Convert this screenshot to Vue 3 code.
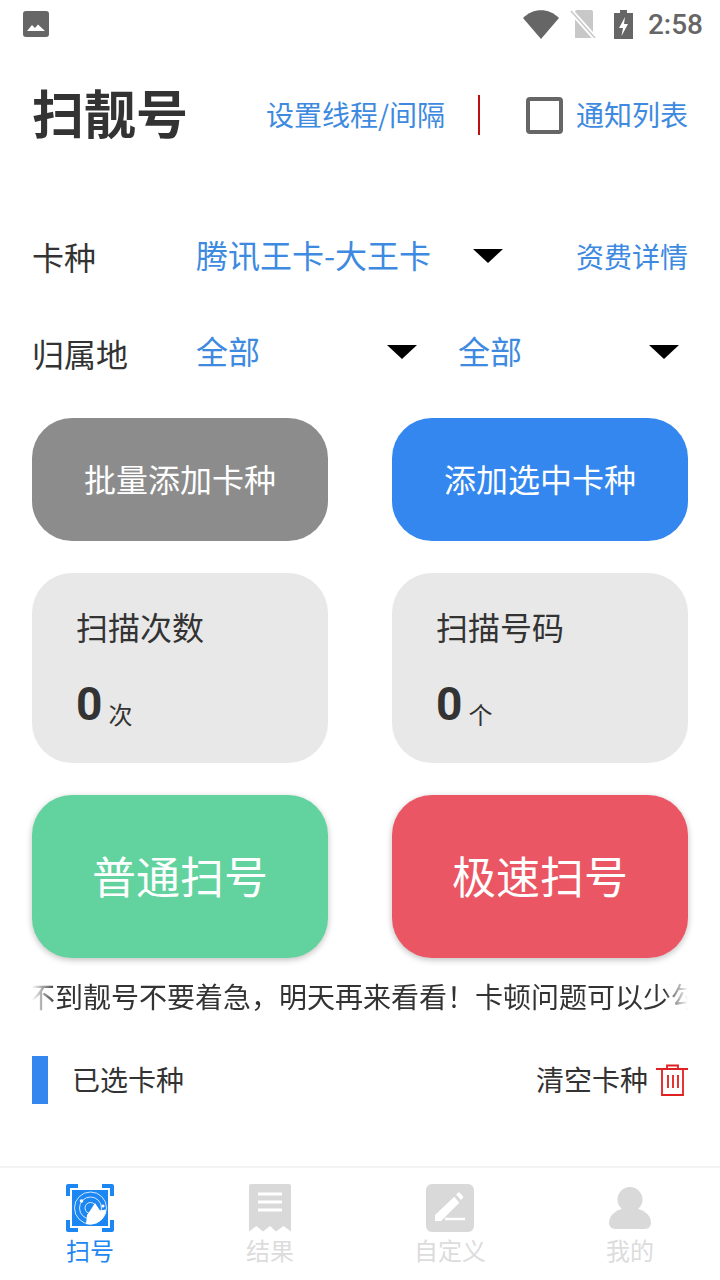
<script setup>
import { ref } from 'vue'

const tabs = ref([
  { key: 'scan', label: '扫号', active: true },
  { key: 'result', label: '结果' },
  { key: 'custom', label: '自定义' },
  { key: 'mine', label: '我的' }
])
</script>

<template>
  <div class="page">
    <div class="status-bar">
      <svg width="26" height="26" viewBox="0 0 26 26">
        <rect width="26" height="26" rx="3" fill="#666" />
        <path d="M4 20l5-6 3 3 3-3.500 7 6.500z" fill="#fff" />
      </svg>
      <div class="st-right">
        <svg width="36" height="29" viewBox="0 0 36 29"><path d="M0 8C10 -2.500 26 -2.500 36 8L18 29z" fill="#666" /></svg>
        <svg class="st-sim" width="26" height="28" viewBox="0 0 26 28">
          <path d="M5 2a2 2 0 0 1 2-2h14a2 2 0 0 1 2 2v24a2 2 0 0 1-2 2H5z" fill="#c8c8c8" />
          <path d="M0 0l25 28" stroke="#fff" stroke-width="5" />
          <path d="M1 1l24 27" stroke="#c8c8c8" stroke-width="1.500" />
        </svg>
        <svg class="st-bat" width="19" height="29" viewBox="0 0 19 29">
          <path d="M6 0h7v3h6v26H0V3h6z" fill="#666" />
          <path d="M11 7l-6 11h4l-1.500 8 6.500-12h-4z" fill="#fff" />
        </svg>
        <span class="st-time">2:58</span>
      </div>
    </div>

    <div class="head">
      <div class="title">扫靓号</div>
      <div class="head-link">设置线程/间隔</div>
      <i class="head-line"></i>
      <i class="check"></i>
      <div class="head-link">通知列表</div>
    </div>

    <div class="row row-card">
      <span class="row-label">卡种</span>
      <div class="sel sel-card"><span>腾讯王卡-大王卡</span><i class="tri"></i></div>
      <span class="fee">资费详情</span>
    </div>

    <div class="row row-area">
      <span class="row-label">归属地</span>
      <div class="sel sel-area"><span>全部</span><i class="tri"></i></div>
      <div class="sel sel-area2"><span>全部</span><i class="tri"></i></div>
    </div>

    <div class="two add-row">
      <button class="add gray">批量添加卡种</button>
      <button class="add blue">添加选中卡种</button>
    </div>

    <div class="two stat-row">
      <div class="stat">
        <div class="stat-name">扫描次数</div>
        <div class="stat-val"><b>0</b><span>次</span></div>
      </div>
      <div class="stat">
        <div class="stat-name">扫描号码</div>
        <div class="stat-val"><b>0</b><span>个</span></div>
      </div>
    </div>

    <div class="two go-row">
      <button class="go green">普通扫号</button>
      <button class="go red">极速扫号</button>
    </div>

    <div class="marquee"><span>不到靓号不要着急，明天再来看看！卡顿问题可以少勾</span></div>

    <div class="picked">
      <i class="picked-bar"></i>
      <span class="picked-text">已选卡种</span>
      <span class="clear">清空卡种</span>
      <svg width="32" height="32" viewBox="0 0 32 32" fill="none" stroke="#e02020" stroke-width="1.800">
        <path d="M0 5h32M11 5V1.500h11V5M6 5v26h21V5M12 11v13M17 11v13M22 11v13" />
      </svg>
    </div>

    <nav class="tabbar">
      <div v-for="tab in tabs" :key="tab.key" class="tab" :class="{ on: tab.active }">
        <svg v-if="tab.key === 'scan'" width="48" height="48" viewBox="0 0 48 48">
          <path d="M2 12V2h10M36 2h10v10M46 36v10H36M12 46H2V36" fill="none" stroke="#1c86f2" stroke-width="4" stroke-linejoin="round" />
          <rect x="6" y="6" width="36" height="36" fill="#1c86f2" />
          <g fill="none" stroke="#fff" stroke-width="0.800">
            <circle cx="24.500" cy="24" r="16" />
            <circle cx="24.500" cy="24" r="11" />
            <circle cx="24.500" cy="24" r="5.500" />
          </g>
          <path d="M24.500 26l4.500-7 5 7.500 6-1a16 16 0 0 1-20 14.500l1-9z" fill="#fff" />
          <circle cx="15.500" cy="17" r="1.800" fill="#fff" />
          <circle cx="37" cy="22" r="1.500" fill="#fff" />
        </svg>
        <svg v-else-if="tab.key === 'result'" width="48" height="48" viewBox="0 0 48 48">
          <path d="M3 2a2 2 0 0 1 2-2h38a2 2 0 0 1 2 2v45.500l-7.500-5.500-7.500 5.500-6-5.500-7 5.500-6.500-5.500-7.500 5.500z" fill="#d9d9d9" />
          <path d="M12 10h24M12 18h24M12 26h24" stroke="#fff" stroke-width="3" />
        </svg>
        <svg v-else-if="tab.key === 'custom'" width="48" height="48" viewBox="0 0 48 48">
          <rect width="48" height="48" rx="6" fill="#d9d9d9" />
          <path d="M9 37v-6l19.300-18.300 5 6L15 37zM30 10.500l3-2.500 4.500 5-2.500 3z" fill="#fff" />
          <path d="M19 35h20" stroke="#fff" stroke-width="2.500" />
        </svg>
        <svg v-else width="48" height="48" viewBox="0 0 48 48">
          <circle cx="24" cy="15.500" r="12.500" fill="#d9d9d9" />
          <path d="M3 39c0-9 9-15 21-15s21 6 21 15a6 6 0 0 1-6 6H9a6 6 0 0 1-6-6z" fill="#d9d9d9" />
        </svg>
        <span class="tab-name">{{ tab.label }}</span>
      </div>
    </nav>
  </div>
</template>

<style>
html, body { margin: 0; background: #fff; }
</style>

<style scoped>
.page {
  width: 720px;
  height: 1280px;
  display: flex;
  flex-direction: column;
  overflow: hidden;
  background: #fff;
  color: #333;
  font-family: "Noto Sans CJK SC", Roboto, sans-serif;
}
i { display: block; font-style: normal; }
button { border: none; padding: 0 0 4px; font-family: inherit; color: #fff; }

.status-bar {
  height: 48px;
  padding: 0 17px 0 23px;
  display: flex;
  align-items: center;
  justify-content: space-between;
}
.st-right { display: flex; align-items: center; }
.st-sim { margin-left: 11px; }
.st-bat { margin-left: 18px; }
.st-time { margin-left: 15px; font: 500 28px Roboto, sans-serif; color: #666; }

.head {
  height: 134px;
  padding: 0 32px;
  display: flex;
  align-items: center;
}
.title { flex: none; width: 234px; padding-bottom: 6px; font-size: 52px; font-weight: 700; line-height: 1; }
.head-link { flex: none; padding-bottom: 2px; font-size: 28px; line-height: 40px; color: #3d8ae0; white-space: nowrap; }
.head-line { flex: none; width: 2px; height: 40px; margin: 0 46px 0 33px; background: #c00d0d; }
.check { flex: none; width: 29px; height: 29px; margin-right: 13px; border: 4px solid #666; border-radius: 4px; }

.row { display: flex; align-items: center; padding: 0 32px; }
.row-card { height: 72px; margin-top: 40px; }
.row-area { height: 72px; margin-top: 24px; }
.row-label { padding-bottom: 4px; font-size: 32px; line-height: 40px; color: #333; }
.row-area .row-label { padding-bottom: 2px; }
.sel { display: flex; align-items: center; margin-bottom: 4px; font-size: 32px; line-height: 40px; color: #3d8ae0; }
.sel span { padding-bottom: 4px; }
.tri { width: 0; height: 0; border-style: solid; border-width: 14px 15px 0; border-color: #000 transparent transparent; }
.sel-card { margin-left: 100px; width: 307px; justify-content: space-between; }
.fee { margin-left: auto; padding-bottom: 4px; font-size: 28px; line-height: 40px; color: #3d8ae0; }
.sel-area { margin-left: 68px; width: 221px; justify-content: space-between; }
.sel-area2 { margin-left: 41px; width: 221px; justify-content: space-between; }

.two {
  display: grid;
  grid-template-columns: 296px 296px;
  justify-content: space-between;
  padding: 0 32px;
}
.add-row { margin-top: 28px; }
.add { height: 123px; border-radius: 40px; font-size: 32px; }
.gray { background: #8c8c8c; }
.blue { background: #3387ee; }

.stat-row { margin-top: 32px; }
.stat {
  height: 190px;
  box-sizing: border-box;
  padding: 31px 0 0 44px;
  border-radius: 40px;
  background: #e8e8e8;
}
.stat-name { padding-bottom: 4px; font-size: 32px; line-height: 44px; }
.stat-val { margin-top: 25px; line-height: 54px; }
.stat-val b { font: 700 46px/54px Roboto, sans-serif; }
.stat-val span { margin-left: 6px; font-size: 24px; vertical-align: -4px; }

.go-row { margin-top: 32px; }
.go { height: 163px; border-radius: 40px; font-size: 44px; box-shadow: 0 2px 6px rgba(0, 0, 0, 0.25); }
.green { background: #62d29e; }
.red { background: #eb5664; }

.marquee {
  margin: 18px 32px 0;
  height: 40px;
  line-height: 40px;
  font-size: 28px;
  white-space: nowrap;
  overflow: hidden;
  -webkit-mask-image: linear-gradient(to right, transparent, #000 24px, #000 calc(100% - 24px), transparent);
  mask-image: linear-gradient(to right, transparent, #000 24px, #000 calc(100% - 24px), transparent);
}
.marquee span { display: inline-block; margin-left: -5px; }

.picked {
  margin-top: 40px;
  height: 48px;
  padding: 0 32px;
  display: flex;
  align-items: center;
}
.picked-bar { width: 16px; height: 48px; background: #3387ee; }
.picked-text { margin-left: 24px; padding-bottom: 2px; font-size: 28px; line-height: 40px; }
.clear { margin-left: auto; margin-right: 8px; padding-bottom: 2px; font-size: 28px; line-height: 40px; }

.tabbar {
  margin-top: auto;
  height: 114px;
  box-sizing: border-box;
  padding-top: 16px;
  border-top: 2px solid #f3f3f3;
  display: grid;
  grid-template-columns: repeat(4, 180px);
}
.tab { display: flex; flex-direction: column; align-items: center; }
.tab-name { margin-top: 1px; font-size: 24px; line-height: 34px; color: #dcdcdc; }
.tab.on .tab-name { color: #1c86f2; }
</style>
